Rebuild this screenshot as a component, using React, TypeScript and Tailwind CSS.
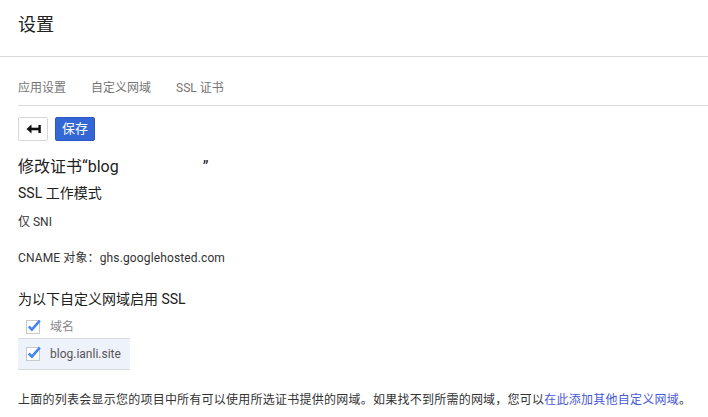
const font = { fontFamily: 'Roboto, "Noto Sans CJK SC", sans-serif' };

function Check() {
  return (
    <svg width="14" height="16" viewBox="0 0 14 16" className="shrink-0 overflow-visible">
      <rect x="0.5" y="1.5" width="13" height="13" fill="white" stroke="#c9c9c9" />
      <path d="M2.8 7.5 L5.9 10.6 L13.8 1.6" fill="none" stroke="#4285f4" strokeWidth="2.5" />
    </svg>
  );
}

export default function App() {
  const tabs = ['应用设置', '自定义网域', 'SSL 证书'];

  return (
    <div className="w-[708px] h-[417px] bg-white text-[#212121] overflow-hidden" style={font}>
      {/* Header */}
      <div className="h-[57px] border-b border-[#dadada] px-[18px] pt-[13px]">
        <h1 className="text-[18px] leading-[24px]">设置</h1>
      </div>

      {/* Tabs */}
      <div className="ml-[18px] flex gap-[25px] border-b border-[#dadada] pt-[23px] pb-[9px] text-[12px] leading-[16px] text-[#757575]">
        {tabs.map((t) => (
          <span key={t}>{t}</span>
        ))}
      </div>

      <div className="px-[18px]">
        {/* Toolbar */}
        <div className="mt-[11px] flex gap-[7px]">
          <button className="w-[30px] h-[24px] flex items-center justify-center border border-[#d6d6d6] rounded-[2px] bg-white">
            <svg width="15" height="10" viewBox="0 0 15 10">
              <path d="M0.5 5 L5.5 0.6 V9.4 Z" fill="#111" />
              <rect x="4" y="3.7" width="9" height="2.6" fill="#111" />
              <rect x="12.4" y="1" width="2.4" height="8" fill="#111" />
            </svg>
          </button>
          <button className="w-[40px] h-[24px] rounded-[2px] bg-[#3367d6] border border-[#2a56c6] text-white text-[13px] leading-[16px]">
            保存
          </button>
        </div>

        <h2 className="mt-[15px] text-[16px] leading-[22px]">
          修改证书“blog<span className="inline-block w-[84px]" />”
        </h2>
        <h3 className="mt-[5px] text-[14px] leading-[20px]">SSL 工作模式</h3>
        <p className="mt-[11px] text-[12px] leading-[16px] text-[#333]">仅 SNI</p>
        <p className="mt-[20px] text-[12px] leading-[16px] text-[#333] tracking-[0.13px]">
          CNAME 对象：ghs.googlehosted.com
        </p>

        <h3 className="mt-[23px] text-[14px] leading-[20px]">为以下自定义网域启用 SSL</h3>

        {/* Domain table */}
        <div className="mt-[7px] w-[112px] text-[12px]">
          <div className="h-[22px] pl-[8px] flex items-center gap-[10px] text-[#888]">
            <Check />
            <span>域名</span>
          </div>
          <div className="h-[32px] pl-[8px] flex items-center gap-[10px] bg-[#eef2fb] border-y border-[#dadada] text-[#555]">
            <Check />
            <span>blog.ianli.site</span>
          </div>
        </div>

        <p className="mt-[22px] text-[12px] leading-[16px] text-[#333] whitespace-nowrap tracking-[0.24px]">
          上面的列表会显示您的项目中所有可以使用所选证书提供的网域。如果找不到所需的网域，您可以
          <a className="text-[#4658d8]">在此添加其他自定义网域</a>。
        </p>
      </div>
    </div>
  );
}
